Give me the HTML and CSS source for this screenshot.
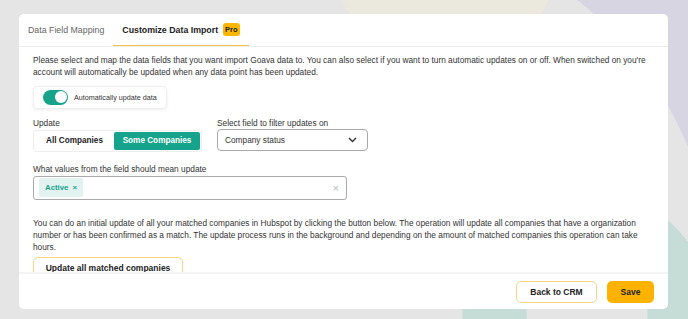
FILE: index.html
```html
<!DOCTYPE html>
<html lang="en">
<head>
  <meta charset="UTF-8">
  <title>Customize Data Import</title>
  <link rel="stylesheet" href="styles.css">
</head>
<body>
  <div class="card">
    <div class="tabs">
      <div class="tab">Data Field Mapping</div>
      <div class="tab active">Customize Data Import <span class="pro">Pro</span></div>
    </div>
    <div class="content">
      <p class="intro">Please select and map the data fields that you want import Goava data to. You can also select if you want to turn automatic updates on or off. When switched on you're account will automatically be updated when any data point has been updated.</p>
      <div class="auto-box">
        <span class="switch"><span class="knob"></span></span>
        <span class="auto-label">Automatically update data</span>
      </div>
      <div class="row">
        <div class="field">
          <div class="label">Update</div>
          <div class="segment">
            <div class="seg">All Companies</div>
            <div class="seg on">Some Companies</div>
          </div>
        </div>
        <div class="field">
          <div class="label">Select field to filter updates on</div>
          <div class="select">
            <span>Company status</span>
            <svg width="9" height="6" viewBox="0 0 9 6"><path d="M1 1l3.5 3.5L8 1" fill="none" stroke="#333" stroke-width="1.4"/></svg>
          </div>
        </div>
      </div>
      <div class="label">What values from the field should mean update</div>
      <div class="multi">
        <span class="tag">Active <span class="x">×</span></span>
        <span class="clear">×</span>
      </div>
      <p class="note">You can do an initial update of all your matched companies in Hubspot by clicking the button below. The operation will update all companies that have a organization number or has been confirmed as a match. The update process runs in the background and depending on the amount of matched companies this operation can take hours.</p>
      <div class="btn outline wide">Update all matched companies</div>
    </div>
    <div class="footer">
      <div class="btn outline">Back to CRM</div>
      <div class="btn primary">Save</div>
    </div>
  </div>
</body>
</html>
```

FILE: styles.css
```css
html, body { margin: 0; padding: 0; height: 319px; overflow: hidden; }
body {
  font-family: "Liberation Sans", Arial, sans-serif;
  color: #333;
  font-size: 8.3px;
  background:
    radial-gradient(circle at 445px -60px, #ebe8de 0 120px, transparent 121px),
    radial-gradient(circle at 587px 315px, transparent 0 60px, #c6dcd6 61px 124px, transparent 125px),
    radial-gradient(circle at -209px 286px, transparent 0 364px, #d8d5e2 365px) 560px 0 / 128px 200px no-repeat,
    #e5e5e5;
}
.card { margin: 14px 0 0 19px; width: 649px; height: 295px; background: #fff; border-radius: 5px; display: flex; flex-direction: column; overflow: hidden; }
.tabs { display: flex; height: 32px; border-bottom: 1px solid #ededed; flex-shrink: 0; }
.tab { padding: 0 9px; display: flex; align-items: center; font-size: 8.8px; color: #666; }
.tab.active { color: #222; font-weight: bold; border-bottom: 1.5px solid #f5c34f; }
.pro { display: inline-flex; align-items: center; height: 13px; background: #fbb700; color: #222; font-size: 7.5px; border-radius: 3px; padding: 0 2px; margin-left: 5px; }
.content { flex: 1; padding: 0 14px; overflow: hidden; }
p { margin: 0; line-height: 12.3px; }
.intro { margin-top: 7px; }
.auto-box { display: inline-flex; align-items: center; margin-top: 7px; height: 23px; padding: 0 9px; border: 1px solid #eee; border-radius: 4px; box-shadow: 0 1px 3px #0001; box-sizing: border-box; }
.switch { width: 25px; height: 15px; border-radius: 8px; background: #16a38a; display: flex; justify-content: flex-end; align-items: center; padding: 0 1.5px; box-sizing: border-box; }
.knob { width: 12px; height: 12px; border-radius: 50%; background: #fff; }
.auto-label { margin-left: 6px; font-size: 7.2px; }
.row { display: flex; gap: 15px; margin-top: 8px; }
.label { line-height: 12px; margin-bottom: 1px; }
.segment { display: flex; width: 169px; height: 22px; border: 1px solid #eee; border-radius: 3px; box-sizing: border-box; padding: 1px; }
.seg { flex: 0 0 79px; display: flex; align-items: center; justify-content: center; font-weight: bold; color: #222; font-size: 8.2px; }
.seg.on { flex: 1; background: #15a38b; color: #fff; border-radius: 2px; }
.select { width: 151px; height: 22px; border: 1px solid #aaa; border-radius: 4px; box-sizing: border-box; display: flex; align-items: center; justify-content: space-between; padding: 0 10px 0 7px; }
.field + .field .label { margin-bottom: 0; }
.multi { width: 314px; height: 24px; border: 1px solid #aaa; border-radius: 3px; box-sizing: border-box; display: flex; align-items: center; justify-content: space-between; padding: 0 7px 0 5px; margin-bottom: 17px; }
.tag { display: inline-flex; align-items: center; height: 19px; background: #e2f3ef; color: #16a38a; font-weight: bold; font-size: 7.8px; padding: 0 6px; border-radius: 2px; }
.tag .x { margin-left: 4px; }
.clear { color: #bbb; font-size: 11px; }
.row + .label { margin-top: 11px; }
.btn { display: flex; align-items: center; justify-content: center; height: 22px; border-radius: 5px; box-sizing: border-box; font-weight: bold; color: #222; font-size: 8.5px; }
.outline { border: 1px solid #f8d488; background: #fff; width: 81px; }
.wide { width: 150px; margin-top: 4px; }
.primary { background: #ffb300; width: 47px; }
.footer { flex-shrink: 0; height: 37px; border-top: 2px solid #f3f3f3; display: flex; justify-content: flex-end; align-items: center; gap: 10px; padding: 0 14px; box-sizing: border-box; }
```
